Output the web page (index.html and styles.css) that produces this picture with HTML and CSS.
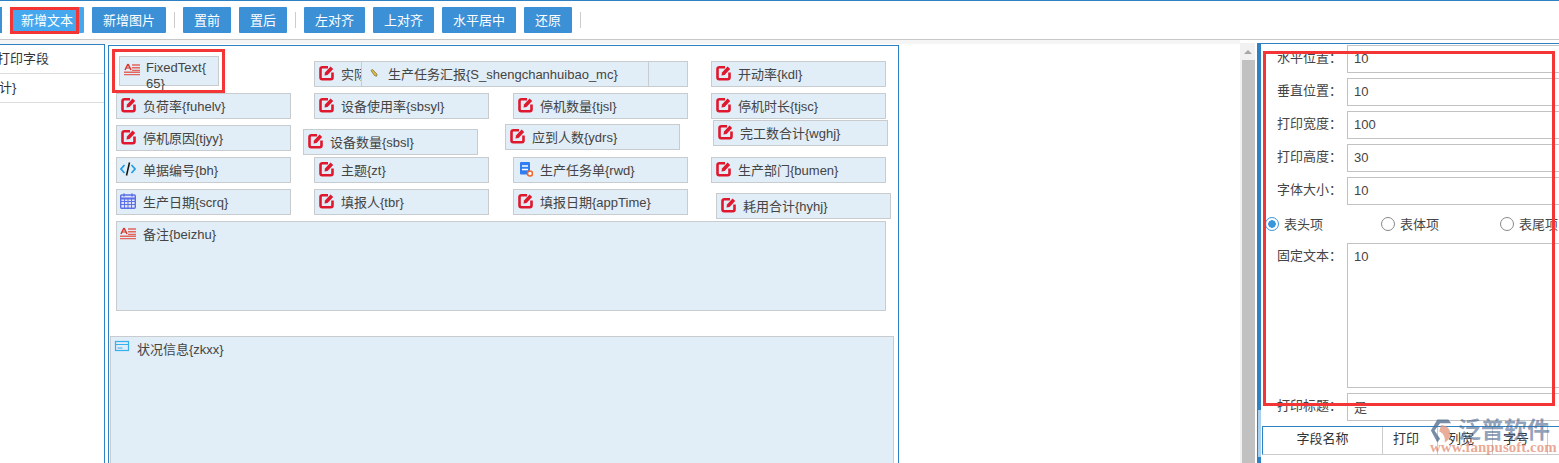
FILE: index.html
```html
<!DOCTYPE html>
<html lang="zh-CN">
<head>
<meta charset="utf-8">
<title>打印设计</title>
<link rel="stylesheet" href="styles.css">
</head>
<body>
<svg class="defs" width="0" height="0" aria-hidden="true">
  <symbol id="i-edit" viewBox="0 0 16 16">
    <path d="M10 2.2H4.200A1.700 1.700 0 0 0 2.500 3.900v8.600a1.700 1.700 0 0 0 1.700 1.700h8.600a1.700 1.700 0 0 0 1.700-1.700V7.500" fill="none" stroke="#e0182d" stroke-width="2.600"/>
    <path d="M6.500 10.600l.5-3L12.600 1.400l2.600 2.500L9.600 10z" fill="#e0182d"/>
  </symbol>
  <symbol id="i-text" viewBox="0 0 16 16">
    <line x1="1" y1="7" x2="4" y2="1" stroke="#d9352b" stroke-width="1.500"/>
    <line x1="7" y1="7" x2="4" y2="1" stroke="#d9352b" stroke-width="1.500"/>
    <line x1="2.400" y1="5" x2="5.600" y2="5" stroke="#d9352b" stroke-width="1"/>
    <path d="M8 2h8M8 4.700h8M8 7.400h8M0 9.200h16M0 11.600h16" stroke="#e2665e" stroke-width="1.400"/>
  </symbol>
  <symbol id="i-code" viewBox="0 0 16 16">
    <path d="M4.500 4L1 8l3.500 4M11.500 4L15 8l-3.500 4" fill="none" stroke="#1e9fe6" stroke-width="1.700"/>
    <path d="M9.500 1.500L6.500 14.500" stroke="#111" stroke-width="1.500"/>
  </symbol>
  <symbol id="i-cal" viewBox="0 0 16 16">
    <rect x="0.700" y="2" width="14.600" height="13.300" rx="1" fill="#dfe4fb" stroke="#5b70e6" stroke-width="1.400"/>
    <path d="M0.700 5.500h14.600" stroke="#5b70e6" stroke-width="2"/>
    <path d="M4 .5v3M12 .5v3" stroke="#5b70e6" stroke-width="1.500"/>
    <path d="M1 8.500h14M1 11.500h14M4.500 6v9M8 6v9M11.500 6v9" stroke="#5b70e6"/>
  </symbol>
  <symbol id="i-task" viewBox="0 0 16 16">
    <rect x="3" y="1" width="10" height="12.500" rx="1" fill="#2f7df0"/>
    <path d="M5 5h6M5 8.500h6" stroke="#fff" stroke-width="1.300"/>
    <circle cx="13" cy="12.500" r="2.500" fill="#fff" stroke="#f0662a" stroke-width="1.600"/>
  </symbol>
  <symbol id="i-card" viewBox="0 0 16 16">
    <rect x="1.500" y="1.500" width="13" height="9" fill="none" stroke="#36b1ee" stroke-width="1.200"/>
    <path d="M1.500 4.500h13M3.500 8h5" stroke="#36b1ee"/>
  </symbol>
  <symbol id="i-pen" viewBox="0 0 16 16">
    <path d="M7.500 4.500l-1.500 1 3.500 5 2 .8.500-2z" fill="#e6c040" stroke="#6b5f35" stroke-width=".7"/>
  </symbol>
</svg>

<header class="toolbar">
  <span class="btn-stub"></span>
  <button class="btn btn-active">新增文本</button>
  <button class="btn">新增图片</button>
  <span class="sep"></span>
  <button class="btn">置前</button>
  <button class="btn">置后</button>
  <span class="sep"></span>
  <button class="btn">左对齐</button>
  <button class="btn">上对齐</button>
  <button class="btn">水平居中</button>
  <button class="btn">还原</button>
  <span class="sep"></span>
  <span class="mark mark-tool"></span>
</header>

<main class="main">
  <section class="workspace">
    <nav class="field-list">
      <div class="field-row"><span class="field-clip">打印字段</span></div>
      <div class="field-row"><span class="field-clip field-clip-sum">计}</span></div>
    </nav>
    <div class="canvas">
      <div class="item p-hidden"></div>
      <div class="item p-sjcl"><svg class="ico"><use href="#i-edit"/></svg><span class="lbl">实际</span></div>
      <div class="item p-rwmc"><svg class="ico"><use href="#i-pen"/></svg><span class="lbl">生产任务汇报{S_shengchanhuibao_mc}</span></div>
      <div class="item p-kdl"><svg class="ico"><use href="#i-edit"/></svg><span class="lbl">开动率{kdl}</span></div>
      <div class="item p-fixed"><svg class="ico ico-text"><use href="#i-text"/></svg><span class="lbl lbl-wrap">FixedText{<br>65}</span></div>
      <div class="item p-fuhelv"><svg class="ico"><use href="#i-edit"/></svg><span class="lbl">负荷率{fuhelv}</span></div>
      <div class="item p-sbsyl"><svg class="ico"><use href="#i-edit"/></svg><span class="lbl">设备使用率{sbsyl}</span></div>
      <div class="item p-tjsl"><svg class="ico"><use href="#i-edit"/></svg><span class="lbl">停机数量{tjsl}</span></div>
      <div class="item p-tjsc"><svg class="ico"><use href="#i-edit"/></svg><span class="lbl">停机时长{tjsc}</span></div>
      <div class="item p-tjyy"><svg class="ico"><use href="#i-edit"/></svg><span class="lbl">停机原因{tjyy}</span></div>
      <div class="item p-sbsl"><svg class="ico"><use href="#i-edit"/></svg><span class="lbl">设备数量{sbsl}</span></div>
      <div class="item p-ydrs"><svg class="ico"><use href="#i-edit"/></svg><span class="lbl">应到人数{ydrs}</span></div>
      <div class="item p-wghj"><svg class="ico"><use href="#i-edit"/></svg><span class="lbl">完工数合计{wghj}</span></div>
      <div class="item p-bh"><svg class="ico"><use href="#i-code"/></svg><span class="lbl">单据编号{bh}</span></div>
      <div class="item p-zt"><svg class="ico"><use href="#i-edit"/></svg><span class="lbl">主题{zt}</span></div>
      <div class="item p-rwd"><svg class="ico"><use href="#i-task"/></svg><span class="lbl">生产任务单{rwd}</span></div>
      <div class="item p-bumen"><svg class="ico"><use href="#i-edit"/></svg><span class="lbl">生产部门{bumen}</span></div>
      <div class="item p-scrq"><svg class="ico"><use href="#i-cal"/></svg><span class="lbl">生产日期{scrq}</span></div>
      <div class="item p-tbr"><svg class="ico"><use href="#i-edit"/></svg><span class="lbl">填报人{tbr}</span></div>
      <div class="item p-apptime"><svg class="ico"><use href="#i-edit"/></svg><span class="lbl">填报日期{appTime}</span></div>
      <div class="item p-hyhj"><svg class="ico"><use href="#i-edit"/></svg><span class="lbl">耗用合计{hyhj}</span></div>
      <div class="item p-beizhu"><svg class="ico ico-note"><use href="#i-text"/></svg><span class="lbl">备注{beizhu}</span></div>
      <div class="item p-zkxx"><svg class="ico"><use href="#i-card"/></svg><span class="lbl">状况信息{zkxx}</span></div>
      <span class="mark mark-fixed"></span>
    </div>
  </section>

  <div class="scrollbar"><span class="scroll-up"></span><span class="scroll-thumb"></span></div>
  <div class="splitter"><span class="split-toggle"></span></div>

  <aside class="props">
    <div class="prop-row"><label class="prop-label">水平位置：</label><input class="prop-input" value="10" readonly></div>
    <div class="prop-row"><label class="prop-label">垂直位置：</label><input class="prop-input" value="10" readonly></div>
    <div class="prop-row"><label class="prop-label">打印宽度：</label><input class="prop-input" value="100" readonly></div>
    <div class="prop-row"><label class="prop-label">打印高度：</label><input class="prop-input" value="30" readonly></div>
    <div class="prop-row"><label class="prop-label">字体大小：</label><input class="prop-input" value="10" readonly></div>
    <div class="radio-row">
      <span class="radio-item"><span class="radio radio-on"></span>表头项</span>
      <span class="radio-item"><span class="radio"></span>表体项</span>
      <span class="radio-item"><span class="radio"></span>表尾项</span>
    </div>
    <div class="prop-row prop-area"><label class="prop-label">固定文本：</label><textarea class="prop-text" readonly>10</textarea></div>
    <div class="prop-row"><label class="prop-label">打印标题：</label><input class="prop-input" value="是" readonly></div>
    <div class="grid-head">
      <span class="grid-cell">字段名称</span>
      <span class="grid-cell grid-cell-num">打印</span>
      <span class="grid-cell grid-cell-num">列宽</span>
      <span class="grid-cell grid-cell-num">字号</span>
      <span class="grid-cell"></span>
    </div>
    <span class="mark mark-props"></span>
    <div class="watermark">
      <svg class="wm-logo" viewBox="0 0 24 28" aria-hidden="true">
        <path d="M8 1h12l3 4H11L5 13l6 9-3 4-7-13z" fill="#56708f"/>
        <path d="M12 7c6 0 10 4 10 9 0 5-3 9-6 10 1-5-1-10-6-12z" fill="#e39a80"/>
      </svg>
      <span class="wm-name">泛普软件</span>
      <span class="wm-url">www.fanpusoft.com</span>
    </div>
  </aside>
</main>
</body>
</html>
```
FILE: styles.css
```css
* { box-sizing: border-box; }
html, body { margin: 0; height: 463px; overflow: hidden; background: #fff; }
body {
  font-family: "Liberation Sans", "Noto Sans CJK SC", sans-serif;
  font-size: 13px;
  color: #444;
}
.defs { position: absolute; }

/* toolbar */
.toolbar {
  position: relative;
  display: flex;
  align-items: center;
  gap: 8px;
  height: 40px;
  padding-bottom: 1px;
  border-top: 1px solid #2e82c4;
  border-bottom: 1px solid #c8c8c8;
}
.btn-stub { width: 2px; height: 26px; background: #3b90d6; }
.btn {
  height: 26px;
  padding: 0 11px;
  border: 0;
  border-radius: 1px;
  background: #3b90d6;
  color: #fff;
  font: inherit;
  white-space: nowrap;
}
.btn-active { background: #45a8ef; }
.sep { width: 1px; height: 16px; background: #ccc; }

/* red annotation frames */
.mark { position: absolute; border: 3px solid #f33535; pointer-events: none; }
.mark-tool { left: 10px; top: 6px; width: 69px; height: 27px; }
.mark-fixed { left: 3px; top: 3px; width: 113px; height: 44px; }
.mark-props { left: 2px; top: 7px; width: 292px; height: 355px; }

/* main */
.main { display: flex; height: 423px; }
.workspace {
  display: flex;
  align-items: flex-start;
  gap: 3px;
  width: 1240px;
  flex: none;
  border-top: 4px solid #f5f5f5;
}
.field-list {
  width: 105px;
  height: 420px;
  border-right: 1px solid #2e82c4;
  border-top: 1px solid #2e82c4;
  overflow: hidden;
}
.field-row {
  height: 29px;
  line-height: 28px;
  border-bottom: 1px solid #ddd;
  white-space: nowrap;
}
.field-clip { display: block; margin-left: -3px; color: #333; }
.field-clip-sum { margin-left: -1px; }

/* canvas */
.canvas {
  position: relative;
  width: 791px;
  height: 500px;
  margin-top: 1px;
  border: 1px solid #2e82c4;
  background: #fff;
}
.item {
  position: absolute;
  display: flex;
  align-items: flex-start;
  width: 175px;
  height: 26px;
  padding-left: 3px;
  border: 1px solid #c9cccf;
  background: #e1edf7;
  overflow: hidden;
  white-space: nowrap;
}
.ico { flex: none; width: 16px; height: 16px; margin-top: 3px; }
.ico-text { margin: 6px -1px 0 1px; }
.ico-note { margin-top: 5px; }
.lbl { margin-left: 7px; line-height: 26px; color: #444; }
.lbl-wrap { line-height: 16px; margin-top: 3px; }

.p-fixed { left: 10px; top: 10px; width: 100px; height: 30px; overflow: visible; }
.p-hidden { left: 404px; top: 15px; }
.p-sjcl { left: 205px; top: 15px; }
.p-rwmc { left: 252px; top: 15px; width: 288px; }
.p-kdl { left: 602px; top: 15px; }
.p-fuhelv { left: 7px; top: 47px; }
.p-sbsyl { left: 205px; top: 47px; }
.p-tjsl { left: 404px; top: 47px; }
.p-tjsc { left: 602px; top: 47px; }
.p-tjyy { left: 7px; top: 79px; }
.p-sbsl { left: 194px; top: 83px; }
.p-ydrs { left: 396px; top: 78px; }
.p-wghj { left: 604px; top: 74px; }
.p-bh { left: 7px; top: 111px; }
.p-zt { left: 205px; top: 111px; }
.p-rwd { left: 404px; top: 111px; }
.p-bumen { left: 602px; top: 111px; }
.p-scrq { left: 7px; top: 143px; }
.p-tbr { left: 205px; top: 143px; }
.p-apptime { left: 404px; top: 143px; }
.p-hyhj { left: 607px; top: 147px; }
.p-beizhu { left: 7px; top: 175px; width: 770px; height: 90px; }
.p-zkxx { left: 1px; top: 290px; width: 784px; height: 200px; }

/* scrollbar and splitter */
.scrollbar {
  display: flex;
  flex-direction: column;
  align-items: center;
  flex: none;
  width: 17px;
  margin-top: 3px;
  padding-right: 1px;
  background: linear-gradient(to right, #f1f1f1 15px, #fff 15px);
}
.scroll-up {
  width: 0;
  height: 0;
  margin: 7px 0 6px;
  border-left: 4px solid transparent;
  border-right: 4px solid transparent;
  border-bottom: 4px solid #a6a6a6;
}
.scroll-thumb { flex: 1; width: 13px; background: #c1c1c1; }
.splitter {
  display: flex;
  flex-direction: column;
  justify-content: flex-end;
  flex: none;
  width: 4px;
  margin-top: 3px;
  padding-bottom: 6px;
  background: #2e82c4;
}
.split-toggle { height: 47px; margin-left: 1px; background: #a9d0ee; }

/* properties */
.props {
  position: relative;
  flex: 1;
  min-width: 0;
  margin-top: 3px;
  padding-top: 1px;
  border-top: 1px solid #2e82c4;
  overflow: hidden;
}
.prop-row { display: flex; height: 28px; margin-bottom: 5px; padding-left: 16px; }
.prop-label { flex: none; width: 70px; line-height: 26px; white-space: nowrap; color: #444; }
.prop-input, .prop-text {
  flex: none;
  width: 320px;
  padding: 0 6px;
  border: 1px solid #c2c2c2;
  border-radius: 0;
  background: #fff;
  color: #444;
  font: inherit;
  outline: 0;
}
.prop-input { height: 28px; padding-bottom: 2px; }
.radio-row { display: flex; align-items: center; height: 38px; margin-top: -5px; padding-left: 4px; }
.radio-item { display: flex; align-items: center; gap: 5px; flex: none; width: 119px; padding-bottom: 2px; white-space: nowrap; }
.radio-item:first-child { width: 116px; }
.radio {
  width: 14px;
  height: 14px;
  margin-top: 2px;
  border: 1px solid #888;
  border-radius: 50%;
  background: #fff;
}
.radio-on {
  border-color: #3a96dd;
  background: radial-gradient(circle, #3a96dd 0 3.5px, #fff 4px);
}
.prop-area { height: 145px; }
.prop-text { height: 145px; padding-top: 5px; line-height: 16px; resize: none; }
.grid-head {
  display: grid;
  grid-template-columns: 120px 55px 55px 55px 100px;
  width: 900px;
  height: 29px;
  margin: 2px 0 0 1px;
  border-top: 1px solid #2e82c4;
  border-left: 1px solid #2e82c4;
  border-bottom: 1px solid #ccc;
}
.grid-cell {
  border-right: 1px solid #ccc;
  line-height: 24px;
  text-align: center;
  color: #333;
}
.grid-cell-num { padding-right: 8px; }

/* watermark */
.watermark {
  position: absolute;
  left: 168px;
  top: 371px;
  width: 125px;
  height: 44px;
  pointer-events: none;
}
.wm-logo { position: absolute; left: 1px; top: 3px; width: 22px; height: 27px; opacity: .8; }
.wm-name {
  position: absolute;
  left: 29px;
  top: -2px;
  font-size: 23px;
  line-height: 34px;
  font-weight: 700;
  white-space: nowrap;
  color: rgba(72, 100, 140, .6);
}
.wm-url {
  position: absolute;
  left: 1px;
  top: 23px;
  font-family: "Liberation Serif", serif;
  font-size: 15px;
  line-height: 18px;
  font-weight: 700;
  white-space: nowrap;
  color: rgba(222, 120, 90, .65);
}
```
